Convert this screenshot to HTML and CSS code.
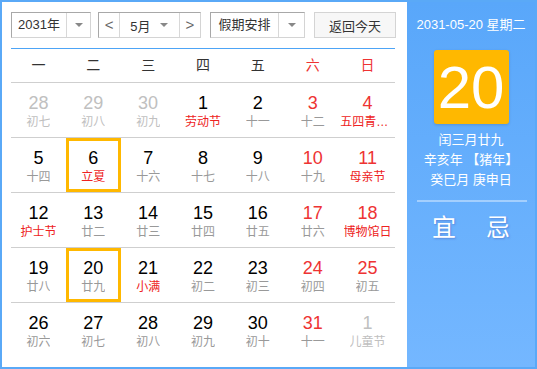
FILE: index.html
```html
<!DOCTYPE html>
<html>
<head>
  <meta charset="UTF-8">
  <title>万年历</title>
  <link rel="stylesheet" href="styles.css">
</head>
<body>
  <div class="calendar">
    <div class="main">
      <div class="toolbar">
        <div class="select year-select">
          <span class="select-text">2031年</span>
          <span class="select-arrow"><i class="caret"></i></span>
        </div>
        <div class="select month-select">
          <span class="nav-btn">&lt;</span>
          <span class="month-mid">
            <span class="month-text">5月</span>
            <i class="caret"></i>
          </span>
          <span class="nav-btn">&gt;</span>
        </div>
        <div class="select holiday-select">
          <span class="select-text">假期安排</span>
          <span class="select-arrow"><i class="caret"></i></span>
        </div>
        <button class="today-btn">返回今天</button>
      </div>

      <div class="week-head">
        <span>一</span><span>二</span><span>三</span><span>四</span><span>五</span>
        <span class="weekend">六</span><span class="weekend">日</span>
      </div>

      <div class="days" id="days"></div>
    </div>

    <div class="side">
      <div class="side-date">2031-05-20 星期二</div>
      <div class="side-day">20</div>
      <div class="side-lunar">
        <div>闰三月廿九</div>
        <div>辛亥年 【猪年】</div>
        <div>癸巳月 庚申日</div>
      </div>
      <div class="side-line"></div>
      <div class="side-yiji">
        <span>宜</span><span>忌</span>
      </div>
    </div>
  </div>

  <script>
    // day, lunar text, flags: o = other month, f = festival, s = selected
    const days = [
      [28, '初七', 'o'], [29, '初八', 'o'], [30, '初九', 'o'], [1, '劳动节', 'f'], [2, '十一', ''], [3, '十二', ''], [4, '五四青年节', 'f'],
      [5, '十四', ''], [6, '立夏', 'fs'], [7, '十六', ''], [8, '十七', ''], [9, '十八', ''], [10, '十九', ''], [11, '母亲节', 'f'],
      [12, '护士节', 'f'], [13, '廿二', ''], [14, '廿三', ''], [15, '廿四', ''], [16, '廿五', ''], [17, '廿六', ''], [18, '博物馆日', 'f'],
      [19, '廿八', ''], [20, '廿九', 's'], [21, '小满', 'f'], [22, '初二', ''], [23, '初三', ''], [24, '初四', ''], [25, '初五', ''],
      [26, '初六', ''], [27, '初七', ''], [28, '初八', ''], [29, '初九', ''], [30, '初十', ''], [31, '十一', ''], [1, '儿童节', 'o']
    ];

    const grid = document.getElementById('days');
    days.forEach((d, i) => {
      const cell = document.createElement('div');
      cell.className = 'day';
      const col = i % 7;
      if (col >= 5) cell.classList.add('weekend');
      if (d[2].includes('o')) cell.classList.add('other');
      if (d[2].includes('f')) cell.classList.add('festival');
      if (d[2].includes('s')) cell.classList.add('selected');

      const num = document.createElement('span');
      num.className = 'num';
      num.textContent = d[0];
      const lunar = document.createElement('span');
      lunar.className = 'lunar';
      lunar.textContent = d[1];

      cell.appendChild(num);
      cell.appendChild(lunar);
      grid.appendChild(cell);
    });
  </script>
</body>
</html>
```

FILE: styles.css
```css
body {
  margin: 0;
  font-family: "Liberation Sans", Arial, "Noto Sans CJK SC", sans-serif;
  color: #333;
}

.calendar {
  display: flex;
  width: 537px;
  height: 369px;
  box-sizing: border-box;
  border: 2px solid #5aa9f7;
}

.main {
  width: 405px;
  box-sizing: border-box;
  padding: 10px 11px 0 9px;
  background-color: #fff;
}

/* toolbar */
.toolbar {
  display: flex;
  height: 26px;
  font-size: 13px;
}

.select {
  display: flex;
  box-sizing: border-box;
  height: 26px;
  border: 1px solid;
  border-color: #a8a8a8 #d4d4d4 #d4d4d4 #a8a8a8;
  background-color: #fff;
}

.select-text {
  flex: 1;
  text-align: center;
  line-height: 24px;
}

.select-arrow {
  display: flex;
  align-items: center;
  justify-content: center;
  border-left: 1px solid #d8d8d8;
}

.caret {
  display: block;
  width: 0;
  height: 0;
  border-left: 4px solid transparent;
  border-right: 4px solid transparent;
  border-top: 4px solid #888;
}

.year-select {
  width: 80px;
}

.year-select .select-arrow {
  width: 23px;
}

.month-select {
  width: 103px;
  margin-left: 7px;
}

.nav-btn {
  width: 21px;
  text-align: center;
  line-height: 23px;
  font-size: 15px;
  color: #666;
}

.month-mid {
  display: flex;
  align-items: center;
  width: 60px;
  border-left: 1px solid #d8d8d8;
  border-right: 1px solid #d8d8d8;
}

.month-text {
  width: 40px;
  text-align: center;
}

.holiday-select {
  width: 95px;
  margin-left: 9px;
}

.holiday-select .select-arrow {
  width: 25px;
}

.today-btn {
  width: 82px;
  height: 26px;
  margin-left: 9px;
  padding: 0;
  border: 1px solid #d4d4d4;
  background-color: #f7f7f7;
  font-family: inherit;
  font-size: 13px;
  color: #333;
}

/* week header */
.week-head {
  display: grid;
  grid-template-columns: repeat(7, 1fr);
  width: 384px;
  margin-top: 10px;
  height: 33px;
  border-top: 1px solid #4da4f6;
  border-bottom: 1px solid #cfcfcf;
  font-size: 14px;
  line-height: 33px;
  text-align: center;
}

.week-head .weekend {
  color: #e33;
}

/* days */
.days {
  display: grid;
  grid-template-columns: repeat(7, 1fr);
  width: 384px;
}

.day {
  display: flex;
  flex-direction: column;
  align-items: center;
  height: 55px;
  box-sizing: border-box;
  padding-top: 10px;
  border-bottom: 1px solid #cfcfcf;
  overflow: hidden;
}

.day:nth-last-child(-n+7) {
  border-bottom-color: transparent;
}

.day.selected {
  box-shadow: inset 0 0 0 3px #ffb800;
}

.num {
  font-size: 18px;
  line-height: 20px;
  color: #000;
}

.lunar {
  max-width: 100%;
  font-size: 12px;
  line-height: 18px;
  color: #999;
  white-space: nowrap;
  overflow: hidden;
  text-overflow: ellipsis;
}

.day.weekend .num {
  color: #e33;
}

.day.festival .lunar {
  color: #e22;
}

.day.other .num,
.day.other .lunar {
  color: #c0c0c0;
}

/* side panel */
.side {
  flex: 1;
  background: linear-gradient(#59a7fa, #74b7ff);
  color: #fff;
  text-align: center;
  padding-top: 13px;
}

.side-date {
  font-size: 13px;
  line-height: 20px;
}

.side-day {
  width: 75px;
  height: 74px;
  margin: 15px auto 0;
  border-radius: 3px;
  background-color: #ffb800;
  box-shadow: 0 1px 3px rgba(0, 0, 0, 0.15);
  font-size: 60px;
  line-height: 76px;
}

.side-lunar {
  margin-top: 6px;
  font-size: 13px;
  line-height: 20px;
}

.side-line {
  height: 2px;
  margin: 10px 8px 0 10px;
  background-color: rgba(255, 255, 255, 0.4);
}

.side-yiji {
  display: flex;
  justify-content: center;
  gap: 30px;
  margin-top: 11px;
  font-size: 24px;
  line-height: 30px;
  text-shadow: 1px 1px 2px rgba(60, 60, 160, 0.35);
}
```
